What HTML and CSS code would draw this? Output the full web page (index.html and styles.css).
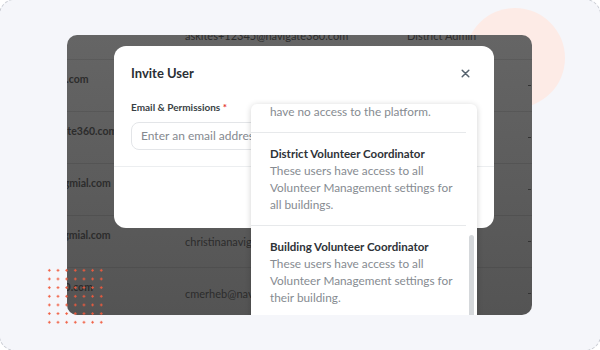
FILE: index.html
```html
<!DOCTYPE html>
<html lang="en">

<head>
    <meta charset="UTF-8">
    <meta name="viewport" content="width=device-width, initial-scale=1.0">
    <title>Invite User</title>
    <link rel="stylesheet" href="styles.css">
</head>

<body>
    <div class="frame">
        <div class="blob"></div>

        <div class="shot">
            <!-- users table behind the overlay -->
            <div class="users">
                <div class="row">
                    <span class="c1"></span>
                    <span class="c2">askites+12345@navigate360.com</span>
                    <span class="c3">District Admin</span>
                    <span class="tick"></span>
                </div>
                <div class="row">
                    <span class="c1">jdoe12@gmail.com</span>
                    <span class="c2"></span>
                    <span class="c3"></span>
                    <span class="tick"></span>
                </div>
                <div class="row">
                    <span class="c1">jo.ann@navigate360.com</span>
                    <span class="c2"></span>
                    <span class="c3"></span>
                    <span class="tick"></span>
                </div>
                <div class="row">
                    <span class="c1">jennifer.bell@gmial.com</span>
                    <span class="c2"></span>
                    <span class="c3"></span>
                    <span class="tick"></span>
                </div>
                <div class="row">
                    <span class="c1">marcus.lees@gmial.com</span>
                    <span class="c2">christinanavigate360@gmail.com</span>
                    <span class="c3"></span>
                    <span class="tick"></span>
                </div>
                <div class="row">
                    <span class="c1">t@navigate360.com</span>
                    <span class="c2">cmerheb@navigate360.com</span>
                    <span class="c3"></span>
                    <span class="tick"></span>
                </div>
            </div>

            <div class="modal">
                <div class="modal-header">
                    <h3>Invite User</h3>
                    <span class="close">
                        <svg width="9" height="9" viewBox="0 0 9 9">
                            <path d="M1.2 1.2L7.8 7.8M7.8 1.2L1.2 7.8" stroke="#56636e" stroke-width="1.5" stroke-linecap="round" />
                        </svg>
                    </span>
                </div>
                <div class="modal-body">
                    <label class="field-label">Email &amp; Permissions <span class="req">*</span></label>
                    <div class="input">Enter an email address</div>
                </div>
            </div>

            <div class="dropdown">
                <div class="options">
                    <div class="option partial">
                        <div class="opt-title">No Access</div>
                        <div class="opt-desc">These users will<br>have no access to the platform.</div>
                    </div>
                    <div class="option">
                        <div class="opt-title">District Volunteer Coordinator</div>
                        <div class="opt-desc">These users have access to all Volunteer Management settings for all buildings.</div>
                    </div>
                    <div class="option">
                        <div class="opt-title">Building Volunteer Coordinator</div>
                        <div class="opt-desc">These users have access to all Volunteer Management settings for their building.</div>
                    </div>
                </div>
                <div class="scroll-thumb"></div>
            </div>
        </div>

        <div class="dots"></div>
    </div>
</body>

</html>
```

FILE: styles.css
```css
* {
    box-sizing: border-box;
    margin: 0;
    padding: 0;
}

body {
    font-family: Lato, 'Open Sans', sans-serif;
    background: #ffffff;
    overflow: hidden;
}

.frame {
    position: relative;
    width: 602px;
    height: 352px;
    margin: -1px;
    padding: 35px 67px;
    background: #f5f6fa;
    border: 1px dashed #c9ccd3;
    border-radius: 16px;
}

.blob {
    position: absolute;
    left: 465px;
    top: 8px;
    width: 100px;
    height: 100px;
    border-radius: 50%;
    background: #fdebe6;
}

.dots {
    position: absolute;
    left: 44.7px;
    top: 265.7px;
    width: 60.7px;
    height: 60.7px;
    background-image: radial-gradient(circle, #f05a3c 0.9px, transparent 1.4px);
    background-size: 8.67px 8.67px;
}

/* dimmed screenshot */
.shot {
    position: relative;
    width: 465px;
    height: 280px;
    border-radius: 10px;
    overflow: hidden;
    background: linear-gradient(180deg, #656565, #545454);
}

.users {
    width: 532px;
    margin-left: -67px;
    margin-top: -27px;
    color: #2c2c2c;
    font-size: 10.5px;
}

.row {
    display: grid;
    grid-template-columns: 185px 222px 121px 4px;
    align-items: center;
    height: 52px;
    border-bottom: 1px solid rgba(0, 0, 0, 0.09);
}

.row:first-child {
    padding-top: 4px;
}

.row .c1 {
    font-weight: 700;
    padding-bottom: 14px;
    white-space: nowrap;
}

.row .c2,
.row .c3 {
    white-space: nowrap;
    font-size: 11px;
}

.tick {
    height: 1px;
    background: #333;
    width: 3px;
}

/* modal */
.modal {
    position: absolute;
    left: 47px;
    top: 11px;
    width: 380px;
    height: 182px;
    background: #ffffff;
    border-radius: 12px;
}

.modal-header {
    display: flex;
    justify-content: space-between;
    align-items: center;
    padding: 18px 24px 0 17px;
}

.modal-header h3 {
    font-size: 13px;
    font-weight: 700;
    color: #2b2f34;
    line-height: 18px;
}

.close {
    display: flex;
}

.modal-body {
    padding: 19px 17px 16px;
    border-bottom: 1px solid #eceef0;
}

.field-label {
    display: block;
    font-size: 10px;
    font-weight: 700;
    color: #3a3f45;
    line-height: 13px;
    margin-bottom: 8px;
}

.req {
    color: #e3342f;
}

.input {
    height: 28px;
    width: 240px;
    border: 1px solid #e3e5e8;
    border-radius: 8px;
    padding: 0 9px;
    font-size: 12px;
    line-height: 26px;
    color: #85898f;
    white-space: nowrap;
}

/* permission dropdown */
.dropdown {
    position: absolute;
    left: 184px;
    top: 69px;
    width: 226px;
    height: 230px;
    background: #ffffff;
    border-radius: 6px;
    box-shadow: 0 1px 6px rgba(0, 0, 0, 0.18);
    overflow: hidden;
}

.options {
    width: 215px;
}

.option {
    padding: 12px 8px 12px 19px;
    border-bottom: 1px solid #e7e9eb;
    font-size: 11.8px;
    line-height: 17px;
}

.option.partial {
    margin-top: -47px;
}

.opt-title {
    font-weight: 700;
    font-size: 11.5px;
    color: #2e3237;
}

.opt-desc {
    color: #868b91;
}

.scroll-thumb {
    position: absolute;
    left: 218px;
    top: 131px;
    width: 5px;
    height: 90px;
    border-radius: 3px;
    background: #d5d8db;
}
```
